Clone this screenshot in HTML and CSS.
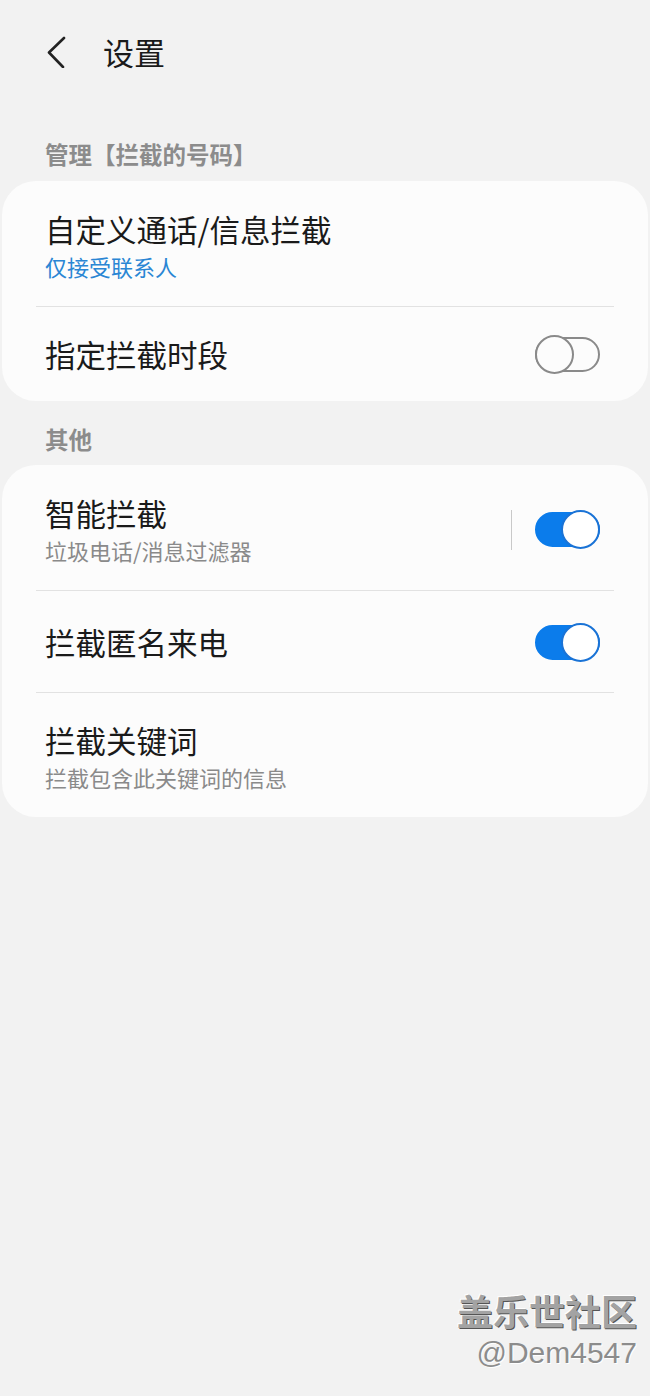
FILE: index.html
```html
<!DOCTYPE html>
<html lang="zh-CN">
<head>
    <meta charset="UTF-8">
    <meta name="viewport" content="width=device-width, initial-scale=1.0">
    <title>设置</title>
    <link rel="stylesheet" href="styles.css">
</head>
<body>
    <div class="page">
        <div class="header">
            <svg class="back" width="20" height="32" viewBox="0 0 20 32">
                <path d="M18 2 L3 16.5 L17 31" fill="none" stroke="#222" stroke-width="2.6" stroke-linecap="round" stroke-linejoin="round"/>
            </svg>
            <div class="title">设置</div>
        </div>

        <div class="section-label first">管理【拦截的号码】</div>
        <div class="card">
            <div class="row row-two">
                <div class="text">
                    <div class="row-title">自定义通话/信息拦截</div>
                    <div class="row-sub blue">仅接受联系人</div>
                </div>
            </div>
            <div class="divider"></div>
            <div class="row row-one">
                <div class="text">
                    <div class="row-title">指定拦截时段</div>
                </div>
                <div class="switch"><div class="knob"></div></div>
            </div>
        </div>

        <div class="section-label second">其他</div>
        <div class="card">
            <div class="row row-two">
                <div class="text">
                    <div class="row-title">智能拦截</div>
                    <div class="row-sub">垃圾电话/消息过滤器</div>
                </div>
                <div class="vline"></div>
                <div class="switch on"><div class="knob"></div></div>
            </div>
            <div class="divider"></div>
            <div class="row row-mid">
                <div class="text">
                    <div class="row-title">拦截匿名来电</div>
                </div>
                <div class="switch on"><div class="knob"></div></div>
            </div>
            <div class="divider"></div>
            <div class="row row-last">
                <div class="text">
                    <div class="row-title">拦截关键词</div>
                    <div class="row-sub">拦截包含此关键词的信息</div>
                </div>
            </div>
        </div>

        <div class="watermark">
            <div class="wm-cn">盖乐世社区</div>
            <div class="wm-en">@Dem4547</div>
        </div>
    </div>
</body>
</html>
```

FILE: styles.css
```css
body {
    margin: 0;
    background-color: #f2f2f2;
    font-family: "Noto Sans CJK SC", "Noto Sans", sans-serif;
    color: #1a1a1a;
}

.page {
    position: relative;
    width: 650px;
    height: 1396px;
    overflow: hidden;
}

.header {
    display: flex;
    align-items: center;
    height: 104px;
    padding-left: 46px;
}

.back {
    display: block;
}

.title {
    margin-left: 37px;
    font-size: 31px;
    line-height: 40px;
}

.section-label {
    padding: 0 45px;
    font-size: 23.5px;
    line-height: 24px;
    font-weight: bold;
    color: #8c8c8c;
}

.section-label.first {
    padding-top: 38px;
    padding-bottom: 15px;
}

.section-label.second {
    padding-top: 26px;
    padding-bottom: 14px;
}

.card {
    margin: 0 2px;
    background-color: #fcfcfc;
    border-radius: 34px;
}

.row {
    display: flex;
    align-items: center;
    padding: 0 48px 0 43px;
}

.row .text {
    flex: 1;
}

.row-two {
    padding-top: 30px;
    padding-bottom: 26px;
}

.row-one {
    padding-top: 29px;
    padding-bottom: 29px;
}

.row-mid {
    padding-top: 33px;
    padding-bottom: 32px;
}

.row-last {
    padding-top: 29px;
    padding-bottom: 26px;
}

.row-title {
    font-size: 30.5px;
    line-height: 36px;
}

.row-sub {
    margin-top: 5px;
    font-size: 22px;
    line-height: 28px;
    color: #8a8a8a;
}

.row-sub.blue {
    color: #2a86d4;
}

.divider {
    height: 1px;
    margin: 0 34px;
    background-color: #e2e2e2;
}

.vline {
    width: 1px;
    height: 40px;
    margin-right: 23px;
    background-color: #c9c9c9;
}

.switch {
    display: flex;
    align-items: center;
    box-sizing: border-box;
    width: 65px;
    height: 35px;
    border: 2px solid #8a8a8a;
    border-radius: 18px;
    background-color: #fcfcfc;
}

.knob {
    flex-shrink: 0;
    box-sizing: border-box;
    width: 39px;
    height: 39px;
    margin-left: -2px;
    border: 2px solid #8a8a8a;
    border-radius: 50%;
    background-color: #fcfcfc;
}

.switch.on {
    justify-content: flex-end;
    border-color: #0b7ceb;
    background-color: #0b7ceb;
}

.switch.on .knob {
    margin-left: 0;
    margin-right: -2px;
    border-color: #1a73d6;
    background-color: #fff;
}

.watermark {
    position: absolute;
    right: 13px;
    top: 1289px;
    text-align: right;
}

.wm-cn {
    font-size: 36px;
    line-height: 42px;
    font-weight: bold;
    color: #a3a3a3;
    text-shadow: 1px 1px 0 #555, -1px -1px 0 #fff;
}

.wm-en {
    margin-top: 5px;
    font-family: "Liberation Sans", sans-serif;
    font-size: 30px;
    line-height: 34px;
    color: #8c8c8c;
    text-shadow: 1px 1px 0 #fff;
}
```
